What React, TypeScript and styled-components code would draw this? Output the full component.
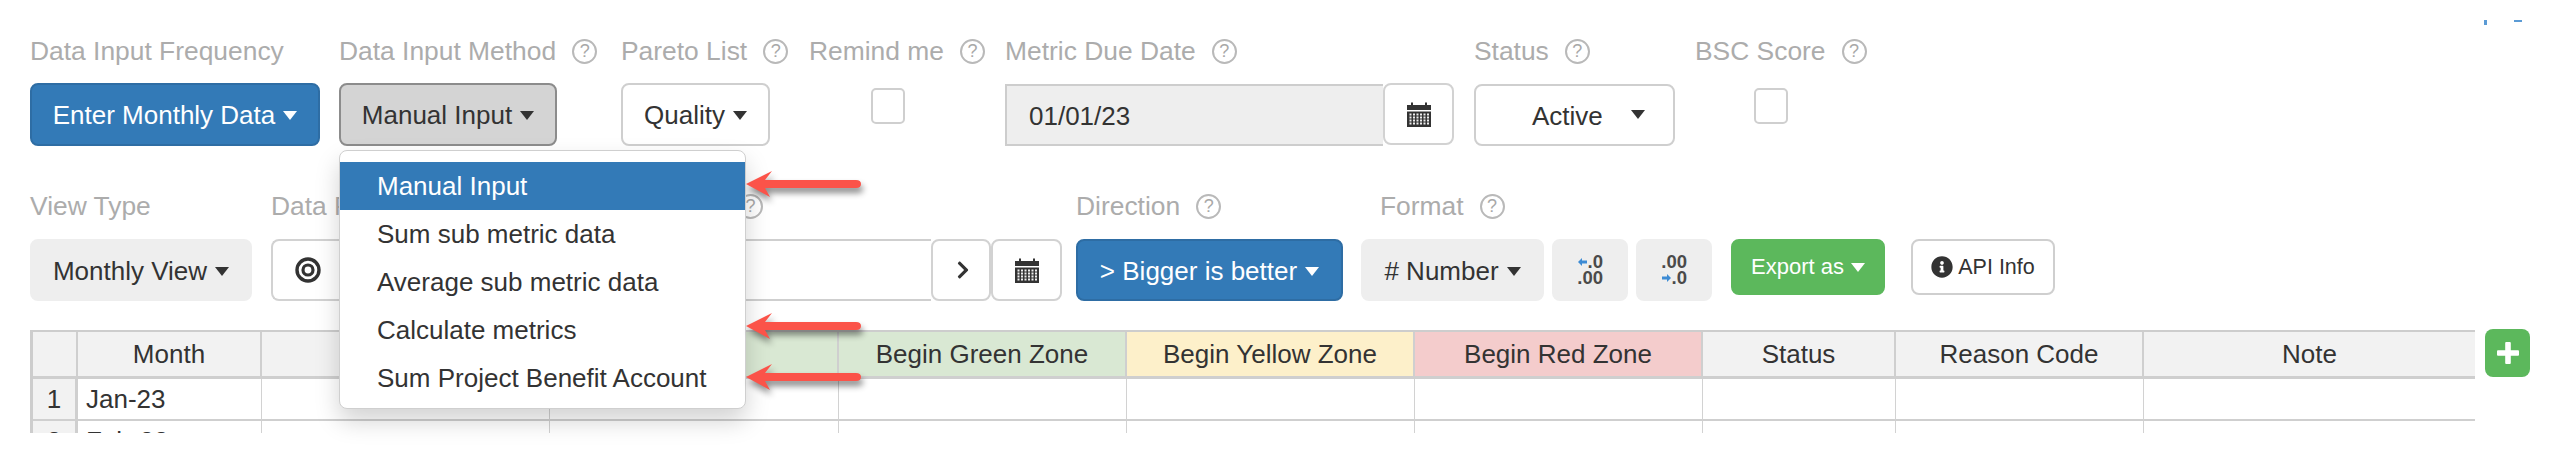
import React from "react";
import styled, { createGlobalStyle } from "styled-components";
import { FaChevronRight, FaInfoCircle } from "react-icons/fa";

const Global = createGlobalStyle`
  html, body { margin: 0; padding: 0; background: #fff; }
  body { font-family: "Liberation Sans", Arial, sans-serif; color: #333; }
  * { box-sizing: border-box; }
`;

const Page = styled.div`
  position: relative;
  width: 2560px;
  height: 452px;
  overflow: hidden;
  padding: 36px 0 0 30px;
  background: #fff;
`;

const TopRow = styled.div`
  display: grid;
  grid-template-columns: 309px 282px 188px 196px 469px 221px 300px;
`;

const SecondRow = styled.div`
  display: flex;
  align-items: flex-start;
  margin-top: 45px;
`;

const Field = styled.div<{ $width?: number; $gap?: number }>`
  display: flex;
  flex-direction: column;
  gap: ${(p) => p.$gap ?? 17}px;
  ${(p) => (p.$width ? `width: ${p.$width}px; flex: none;` : "")}
`;

const Label = styled.div<{ $indent?: number; $width?: number }>`
  display: flex;
  align-items: center;
  height: 30px;
  font-size: 26.4px;
  color: #acacac;
  white-space: nowrap;
  margin-left: ${(p) => p.$indent ?? 0}px;
  ${(p) => (p.$width ? `width: ${p.$width}px;` : "")}
`;

const Help = styled.span<{ $push?: boolean }>`
  display: inline-flex;
  align-items: center;
  justify-content: center;
  width: 25px;
  height: 25px;
  margin-left: ${(p) => (p.$push ? "auto" : "16px")};
  border: 2px solid #b9b9b9;
  border-radius: 50%;
  font-size: 18px;
  color: #a8a8a8;
`;

const Button = styled.div<{ $tone?: "blue" | "pressed" | "white" | "gray" | "green"; $width: number; $height?: number }>`
  display: flex;
  align-items: center;
  justify-content: center;
  gap: 8px;
  flex: none;
  width: ${(p) => p.$width}px;
  height: ${(p) => p.$height ?? 63}px;
  padding-top: 2px;
  border-radius: 8px;
  font-size: 26px;
  white-space: nowrap;
  border: 2px solid
    ${(p) =>
      p.$tone === "blue"
        ? "#2e6da4"
        : p.$tone === "pressed"
        ? "#8c8c8c"
        : p.$tone === "gray"
        ? "#eeeeee"
        : p.$tone === "green"
        ? "#5cb85c"
        : "#cfcfcf"};
  background: ${(p) =>
    p.$tone === "blue"
      ? "#337ab7"
      : p.$tone === "pressed"
      ? "#d4d4d4"
      : p.$tone === "gray"
      ? "#eeeeee"
      : p.$tone === "green"
      ? "#5cb85c"
      : "#fff"};
  color: ${(p) => (p.$tone === "blue" || p.$tone === "green" ? "#fff" : "#333")};
`;

const SmallButton = styled(Button)`
  font-size: 22px;
  gap: 7px;
  padding-top: 0;
`;

const Caret = styled.span`
  display: inline-block;
  width: 0;
  height: 0;
  border-left: 7px solid transparent;
  border-right: 7px solid transparent;
  border-top: 9px solid currentColor;
`;

const CheckBox = styled.div`
  width: 34px;
  height: 36px;
  margin: 5px 0 0 62px;
  border: 2px solid #cfcfcf;
  border-radius: 5px;
  background: #fff;
`;

const BscBox = styled(CheckBox)`
  margin-left: 59px;
`;

const Group = styled.div`
  display: flex;
  align-items: flex-start;
`;

const DateInput = styled.div`
  display: flex;
  align-items: center;
  width: 378px;
  height: 62px;
  margin-top: 1px;
  padding: 2px 0 0 22px;
  font-size: 26px;
  color: #333;
  background: #eeeeee;
  border: 2px solid #cdcdcd;
  border-right: none;
`;

const AddOn = styled.div<{ $width: number }>`
  display: flex;
  align-items: center;
  justify-content: center;
  flex: none;
  width: ${(p) => p.$width}px;
  height: 62px;
  background: #fff;
  border: 2px solid #d2d2d2;
  border-radius: 8px;
  color: #333;
`;

const SelectBox = styled.div`
  display: flex;
  align-items: center;
  width: 201px;
  height: 62px;
  margin-top: 1px;
  padding: 2px 0 0 56px;
  font-size: 26px;
  border: 2px solid #cfcfcf;
  border-radius: 8px;
  background: #fff;
`;

const SelectCaret = styled(Caret)`
  margin-left: 28px;
  margin-bottom: 4px;
`;

const TargetAddOn = styled.div`
  display: flex;
  align-items: center;
  justify-content: center;
  width: 72px;
  height: 62px;
  border: 2px solid #d2d2d2;
  border-right: none;
  border-radius: 8px 0 0 8px;
`;

const RangeInput = styled.div`
  width: 588px;
  height: 62px;
  border-top: 2px solid #cfcfcf;
  border-bottom: 2px solid #cfcfcf;
`;

const ChevronSlot = styled.span`
  display: flex;
  margin-left: 3px;
`;

const Controls = styled.div`
  display: flex;
  align-items: flex-start;
`;

const DecimalButton = styled(Button)`
  flex-direction: column;
  gap: 0;
  margin-left: 8px;
  padding-top: 0;
  font-size: 18.5px;
  line-height: 16px;
  font-weight: 700;
  color: #4a4a4a;
`;

const DecimalLine = styled.span`
  display: flex;
  align-items: center;
  justify-content: flex-end;
  gap: 1px;
  width: 34px;
  padding-right: 4px;
`;

const ExportButton = styled(SmallButton)`
  margin-left: 19px;
`;

const ApiButton = styled(SmallButton)`
  margin-left: 26px;
  gap: 5px;
  font-size: 21.5px;
`;

const TableRow = styled.div`
  display: flex;
  align-items: flex-start;
  gap: 10px;
  margin-top: 29px;
`;

const TableClip = styled.div`
  width: 2445px;
  height: 103px;
  overflow: hidden;
`;

const Sheet = styled.table`
  width: 2445px;
  table-layout: fixed;
  border-collapse: separate;
  border-spacing: 0;
  font-size: 26px;
  color: #333;
  border-top: 2px solid #cdcdcd;
  border-left: 3px solid #cdcdcd;
`;

const HeadCell = styled.th<{ $bg?: string }>`
  height: 47px;
  padding: 0;
  font-weight: 400;
  text-align: center;
  background: ${(p) => p.$bg ?? "#f2f2f2"};
  border-right: 2px solid #cfcfcf;
  border-bottom: 3px solid #cfcfcf;
`;

const RowHead = styled.td`
  height: 42px;
  padding: 0;
  text-align: center;
  background: #f2f2f2;
  border-right: 3px solid #cfcfcf;
  border-bottom: 2px solid #cfcfcf;
`;

const Cell = styled.td`
  height: 42px;
  padding: 0 8px;
  background: #fff;
  border-right: 1.5px solid #d2d2d2;
  border-bottom: 2px solid #cfcfcf;
`;

const AddButton = styled.div`
  display: flex;
  align-items: center;
  justify-content: center;
  width: 45px;
  height: 48px;
  margin-top: -1px;
  border-radius: 8px;
  background: #5cb85c;
`;

const Menu = styled.div`
  position: absolute;
  left: 339px;
  top: 150px;
  width: 407px;
  height: 259px;
  padding-top: 11px;
  background: #fff;
  border: 1.5px solid #cfcfcf;
  border-radius: 8px;
  box-shadow: 0 12px 24px rgba(0, 0, 0, 0.175);
`;

const MenuItem = styled.div<{ $active?: boolean }>`
  display: flex;
  align-items: center;
  height: 48px;
  padding-left: 37px;
  font-size: 26px;
  white-space: nowrap;
  background: ${(p) => (p.$active ? "#337ab7" : "transparent")};
  color: ${(p) => (p.$active ? "#fff" : "#333")};
`;

const ArrowSvg = styled.svg<{ $top: number }>`
  position: absolute;
  left: 746px;
  top: ${(p) => p.$top}px;
  overflow: visible;
  filter: drop-shadow(2px 5px 3px rgba(0, 0, 0, 0.45));
`;

const Speck = styled.span<{ $left: number; $width: number; $height: number }>`
  position: absolute;
  top: 20px;
  left: ${(p) => p.$left}px;
  width: ${(p) => p.$width}px;
  height: ${(p) => p.$height}px;
  background: #5b9bd5;
`;

const Arrow = ({ top }: { top: number }) => (
  <ArrowSvg $top={top} width="118" height="28">
    <path
      d="M0 14 L26 1 L19 10 L110 10 Q115 10 115 14 Q115 18 110 18 L19 18 L24 27 Z"
      fill="#fb5349"
    />
  </ArrowSvg>
);

const Calendar = () => (
  <svg width="24" height="26" viewBox="0 0 24 26" fill="#333">
    <path d="M0 4h4V1.5h2V4h12V1.5h2V4h4v5H0z" />
    <path d="M0 10.5h24V26H0z" />
    <g fill="#eee">
      {[12.5, 15.5, 18.5, 21.5].map((y) =>
        [2.5, 6, 9.5, 13, 16.5, 20].map((x) => <rect key={`${x}-${y}`} x={x} y={y} width="2" height="2" />)
      )}
    </g>
  </svg>
);

const Bullseye = () => (
  <svg width="26" height="26" viewBox="0 0 26 26" fill="none" stroke="#333">
    <circle cx="13" cy="13" r="11" strokeWidth="3.4" />
    <circle cx="13" cy="13" r="5" strokeWidth="3.2" />
  </svg>
);

const Plus = () => (
  <svg width="24" height="24" viewBox="0 0 24 24" fill="#fff">
    <rect x="9.2" y="1" width="5.6" height="22" rx="1" />
    <rect x="1" y="9.2" width="22" height="5.6" rx="1" />
  </svg>
);

const SmallArrow = ({ flip }: { flip?: boolean }) => (
  <svg width="9" height="8" viewBox="0 0 9 8" fill="#3d8bd4" style={flip ? { transform: "scaleX(-1)" } : undefined}>
    <path d="M0 4 L4 0 V2.5 H9 V5.5 H4 V8 Z" />
  </svg>
);

const columns = [45, 184, 288, 289, 288, 288, 288, 193, 248, 333];
const empties = Array.from({ length: 8 });

export default function App() {
  return (
    <>
      <Global />
      <Page>
        <TopRow>
          <Field>
            <Label>Data Input Frequency</Label>
            <Button $tone="blue" $width={290}>Enter Monthly Data <Caret /></Button>
          </Field>
          <Field>
            <Label>Data Input Method<Help>?</Help></Label>
            <Button $tone="pressed" $width={218}>Manual Input <Caret /></Button>
          </Field>
          <Field>
            <Label>Pareto List<Help>?</Help></Label>
            <Button $tone="white" $width={149}>Quality <Caret /></Button>
          </Field>
          <Field>
            <Label>Remind me<Help>?</Help></Label>
            <CheckBox />
          </Field>
          <Field>
            <Label>Metric Due Date<Help>?</Help></Label>
            <Group>
              <DateInput>01/01/23</DateInput>
              <AddOn $width={71}><Calendar /></AddOn>
            </Group>
          </Field>
          <Field>
            <Label>Status<Help>?</Help></Label>
            <SelectBox>Active<SelectCaret /></SelectBox>
          </Field>
          <Field>
            <Label>BSC Score<Help>?</Help></Label>
            <BscBox />
          </Field>
        </TopRow>

        <SecondRow>
          <Field $width={241} $gap={18}>
            <Label>View Type</Label>
            <Button $tone="gray" $width={222} $height={62}>Monthly View <Caret /></Button>
          </Field>
          <Field $width={805} $gap={18}>
            <Label $width={492}>Data Period<Help $push>?</Help></Label>
            <Group>
              <TargetAddOn><Bullseye /></TargetAddOn>
              <RangeInput />
              <AddOn $width={60}><ChevronSlot><FaChevronRight size={20} /></ChevronSlot></AddOn>
              <AddOn $width={71}><Calendar /></AddOn>
            </Group>
          </Field>
          <Field $width={285} $gap={18}>
            <Label>Direction<Help>?</Help></Label>
            <Button $tone="blue" $width={267} $height={62}>&gt; Bigger is better <Caret /></Button>
          </Field>
          <Field $gap={18}>
            <Label $indent={19}>Format<Help>?</Help></Label>
            <Controls>
              <Button $tone="gray" $width={183} $height={62}># Number <Caret /></Button>
              <DecimalButton $tone="gray" $width={76} $height={62}>
                <DecimalLine><SmallArrow />.0</DecimalLine>
                <DecimalLine>.00</DecimalLine>
              </DecimalButton>
              <DecimalButton $tone="gray" $width={76} $height={62}>
                <DecimalLine>.00</DecimalLine>
                <DecimalLine><SmallArrow flip />.0</DecimalLine>
              </DecimalButton>
              <ExportButton $tone="green" $width={154} $height={56}>Export as <Caret /></ExportButton>
              <ApiButton $tone="white" $width={144} $height={56}><FaInfoCircle size={22} />API Info</ApiButton>
            </Controls>
          </Field>
        </SecondRow>

        <TableRow>
          <TableClip>
            <Sheet>
              <colgroup>
                {columns.map((w, i) => (
                  <col key={i} style={{ width: w }} />
                ))}
              </colgroup>
              <thead>
                <tr>
                  <HeadCell />
                  <HeadCell>Month</HeadCell>
                  <HeadCell />
                  <HeadCell $bg="#d9e8d3" />
                  <HeadCell $bg="#d9e8d3">Begin Green Zone</HeadCell>
                  <HeadCell $bg="#fdf0ca">Begin Yellow Zone</HeadCell>
                  <HeadCell $bg="#f4cccc">Begin Red Zone</HeadCell>
                  <HeadCell>Status</HeadCell>
                  <HeadCell>Reason Code</HeadCell>
                  <HeadCell>Note</HeadCell>
                </tr>
              </thead>
              <tbody>
                <tr>
                  <RowHead>1</RowHead>
                  <Cell>Jan-23</Cell>
                  {empties.map((_, i) => <Cell key={i} />)}
                </tr>
                <tr>
                  <RowHead>2</RowHead>
                  <Cell>Feb-23</Cell>
                  {empties.map((_, i) => <Cell key={i} />)}
                </tr>
              </tbody>
            </Sheet>
          </TableClip>
          <AddButton><Plus /></AddButton>
        </TableRow>

        <Speck $left={2484} $width={3} $height={5} />
        <Speck $left={2514} $width={8} $height={2} />

        <Menu>
          <MenuItem $active>Manual Input</MenuItem>
          <MenuItem>Sum sub metric data</MenuItem>
          <MenuItem>Average sub metric data</MenuItem>
          <MenuItem>Calculate metrics</MenuItem>
          <MenuItem>Sum Project Benefit Account</MenuItem>
        </Menu>
        <Arrow top={170} />
        <Arrow top={312} />
        <Arrow top={363} />
      </Page>
    </>
  );
}
